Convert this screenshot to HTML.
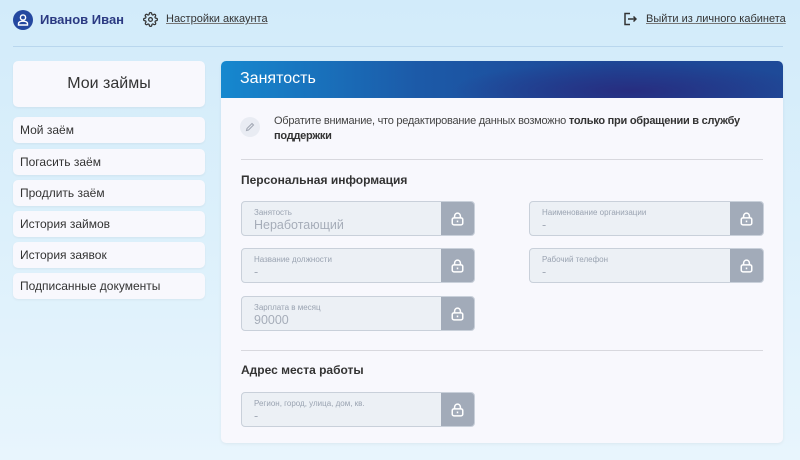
<!DOCTYPE html>
<html><head><meta charset="utf-8"><style>
*{margin:0;padding:0;box-sizing:border-box}
body{width:800px;height:460px;overflow:hidden;font-family:"Liberation Sans","Noto Sans CJK SC",sans-serif;background:linear-gradient(180deg,#d2ebfa 0%,#dcf0fb 50%,#e8f5fd 100%);position:relative;color:#333}
.abs{position:absolute}
.hdr-line{left:13px;top:46px;width:770px;height:1px;background:#b9d7ee}
.name{left:40px;top:12px;font-size:13px;font-weight:bold;color:#2b3a82}
.link{font-size:11px;color:#333;text-decoration:underline;text-decoration-color:#777}
.side{left:13px;width:192px;background:#f8f8fd;border-radius:5px;box-shadow:0 1px 2px rgba(0,0,0,.05)}
.item{height:26px;font-size:12px;color:#333;padding:6px 0 0 7px}
.card{left:221px;top:61px;width:562px;height:382px;background:#f8f8fd;border-radius:5px;overflow:hidden;box-shadow:0 1px 3px rgba(0,0,0,.06)}
.band{left:0;top:0;width:562px;height:37px;background:radial-gradient(ellipse 180px 30px at 410px 30px,#272d80 0%,rgba(30,60,150,0) 100%),linear-gradient(90deg,#1688cf 0%,#1c5aa8 35%,#1e4796 70%,#1e4a98 100%)}
.band span{position:absolute;left:19px;top:9px;color:#fff;font-size:16px}
.divl{height:1px;background:#d8d8de}
.f{height:35px;border:1px solid #c9d0da;border-radius:4px;background:#ecf0f5;overflow:hidden}
.f .lb{position:absolute;left:12px;top:6px;font-size:8px;color:#9aa3b1}
.f .vl{position:absolute;left:12px;top:16px;font-size:12.5px;color:#a6adb9}
.f .lk{position:absolute;right:0;top:0;width:33px;height:100%;background:#a2abb9;display:flex;align-items:center;justify-content:center}
.sec{font-size:12px;font-weight:bold;color:#333}
</style></head><body>
<div class="abs hdr-line"></div>
<svg class="abs" style="left:13px;top:10px" width="20" height="20" viewBox="0 0 20 20"><circle cx="10" cy="10" r="10" fill="#2448a0"/><circle cx="10" cy="7.5" r="2.6" fill="none" stroke="#fff" stroke-width="1.4"/><path d="M5.5 15h9v-1.2c0-1.6-1.4-2.6-4.5-2.6s-4.5 1-4.5 2.6z" fill="none" stroke="#fff" stroke-width="1.4"/></svg>
<div class="abs name">Иванов Иван</div>
<svg class="abs" style="left:143px;top:12px" width="15" height="15" viewBox="0 0 24 24" fill="none" stroke="#333" stroke-width="2"><circle cx="12" cy="12" r="3"/><path d="M19.4 15a1.65 1.65 0 0 0 .33 1.82l.06.06a2 2 0 1 1-2.83 2.830l-.06-.06a1.65 1.65 0 0 0-1.82-.33 1.65 1.65 0 0 0-1 1.51V21a2 2 0 0 1-4 0v-.09A1.650 1.65 0 0 0 9 19.4a1.65 1.65 0 0 0-1.82.33l-.06.06a2 2 0 1 1-2.83-2.83l.06-.06a1.65 1.65 0 0 0 .33-1.82 1.65 1.65 0 0 0-1.51-1H3a2 2 0 0 1 0-4h.09A1.65 1.65 0 0 0 4.6 9a1.65 1.65 0 0 0-.33-1.82l-.06-.06a2 2 0 1 1 2.83-2.83l.06.06a1.65 1.65 0 0 0 1.82.33H9a1.65 1.65 0 0 0 1-1.51V3a2 2 0 0 1 4 0v.09a1.65 1.65 0 0 0 1 1.51 1.65 1.65 0 0 0 1.82-.33l.06-.06a2 2 0 1 1 2.83 2.83l-.06.06a1.65 1.65 0 0 0-.33 1.82V9a1.65 1.65 0 0 0 1.51 1H21a2 2 0 0 1 0 4h-.09a1.65 1.65 0 0 0-1.51 1z"/></svg>
<div class="abs link" style="left:166px;top:13px">Настройки аккаунта</div>
<svg class="abs" style="left:623px;top:12px" width="14" height="14" viewBox="0 0 14 14" fill="none" stroke="#333" stroke-width="1.5"><path d="M7 1.5H2v11h5"/><path d="M5 7h8M10.5 4.5 13 7l-2.5 2.5"/></svg>
<div class="abs link" style="left:646px;top:13px">Выйти из личного кабинета</div>

<div class="abs side" style="top:61px;height:46px;font-size:16px;text-align:center;padding-top:14px;color:#333">Мои займы</div>
<div class="abs side item" style="top:117px">Мой заём</div>
<div class="abs side item" style="top:149px">Погасить заём</div>
<div class="abs side item" style="top:180px">Продлить заём</div>
<div class="abs side item" style="top:211px">История займов</div>
<div class="abs side item" style="top:242px">История заявок</div>
<div class="abs side item" style="top:273px">Подписанные документы</div>

<div class="abs card">
<div class="abs band"><span>Занятость</span></div>
<svg class="abs" style="left:19px;top:56px" width="20" height="20" viewBox="0 0 20 20"><circle cx="10" cy="10" r="10" fill="#e9ecf3"/><path d="M6.5 13.5l.5-2 5-5 1.5 1.5-5 5z" fill="none" stroke="#a3a9b5" stroke-width="1.1"/></svg>
<div class="abs" style="left:53px;top:53px;width:480px;font-size:11px;line-height:15px;color:#444;letter-spacing:-0.25px">Обратите внимание, что редактирование данных возможно <b style="color:#333">только при обращении в службу поддержки</b></div>
<div class="abs divl" style="left:20px;top:98px;width:522px"></div>
<div class="abs sec" style="left:20px;top:112px">Персональная информация</div>

<div class="abs f" style="left:20px;top:140px;width:234px"><div class="lb">Занятость</div><div class="vl">Неработающий</div><div class="lk"><svg width="13" height="14" viewBox="0 0 11 12" fill="none" stroke="#fff" stroke-width="1.3"><rect x="1" y="5" width="9" height="6" rx="1.5"/><path d="M3 5V3.5a2.5 2.5 0 0 1 5 0V5"/><path d="M5.5 7.3v1.5"/></svg></div></div>
<div class="abs f" style="left:308px;top:140px;width:235px"><div class="lb">Наименование организации</div><div class="vl">-</div><div class="lk"><svg width="13" height="14" viewBox="0 0 11 12" fill="none" stroke="#fff" stroke-width="1.3"><rect x="1" y="5" width="9" height="6" rx="1.5"/><path d="M3 5V3.5a2.5 2.5 0 0 1 5 0V5"/><path d="M5.5 7.3v1.5"/></svg></div></div>
<div class="abs f" style="left:20px;top:187px;width:234px"><div class="lb">Название должности</div><div class="vl">-</div><div class="lk"><svg width="13" height="14" viewBox="0 0 11 12" fill="none" stroke="#fff" stroke-width="1.3"><rect x="1" y="5" width="9" height="6" rx="1.5"/><path d="M3 5V3.5a2.5 2.5 0 0 1 5 0V5"/><path d="M5.5 7.3v1.5"/></svg></div></div>
<div class="abs f" style="left:308px;top:187px;width:235px"><div class="lb">Рабочий телефон</div><div class="vl">-</div><div class="lk"><svg width="13" height="14" viewBox="0 0 11 12" fill="none" stroke="#fff" stroke-width="1.3"><rect x="1" y="5" width="9" height="6" rx="1.5"/><path d="M3 5V3.5a2.5 2.5 0 0 1 5 0V5"/><path d="M5.5 7.3v1.5"/></svg></div></div>
<div class="abs f" style="left:20px;top:235px;width:234px"><div class="lb">Зарплата в месяц</div><div class="vl">90000</div><div class="lk"><svg width="13" height="14" viewBox="0 0 11 12" fill="none" stroke="#fff" stroke-width="1.3"><rect x="1" y="5" width="9" height="6" rx="1.5"/><path d="M3 5V3.5a2.5 2.5 0 0 1 5 0V5"/><path d="M5.5 7.3v1.5"/></svg></div></div>

<div class="abs divl" style="left:20px;top:289px;width:522px"></div>
<div class="abs sec" style="left:20px;top:302px">Адрес места работы</div>
<div class="abs f" style="left:20px;top:331px;width:234px"><div class="lb">Регион, город, улица, дом, кв.</div><div class="vl">-</div><div class="lk"><svg width="13" height="14" viewBox="0 0 11 12" fill="none" stroke="#fff" stroke-width="1.3"><rect x="1" y="5" width="9" height="6" rx="1.5"/><path d="M3 5V3.5a2.5 2.5 0 0 1 5 0V5"/><path d="M5.5 7.3v1.5"/></svg></div></div>
</div>
</body></html>
